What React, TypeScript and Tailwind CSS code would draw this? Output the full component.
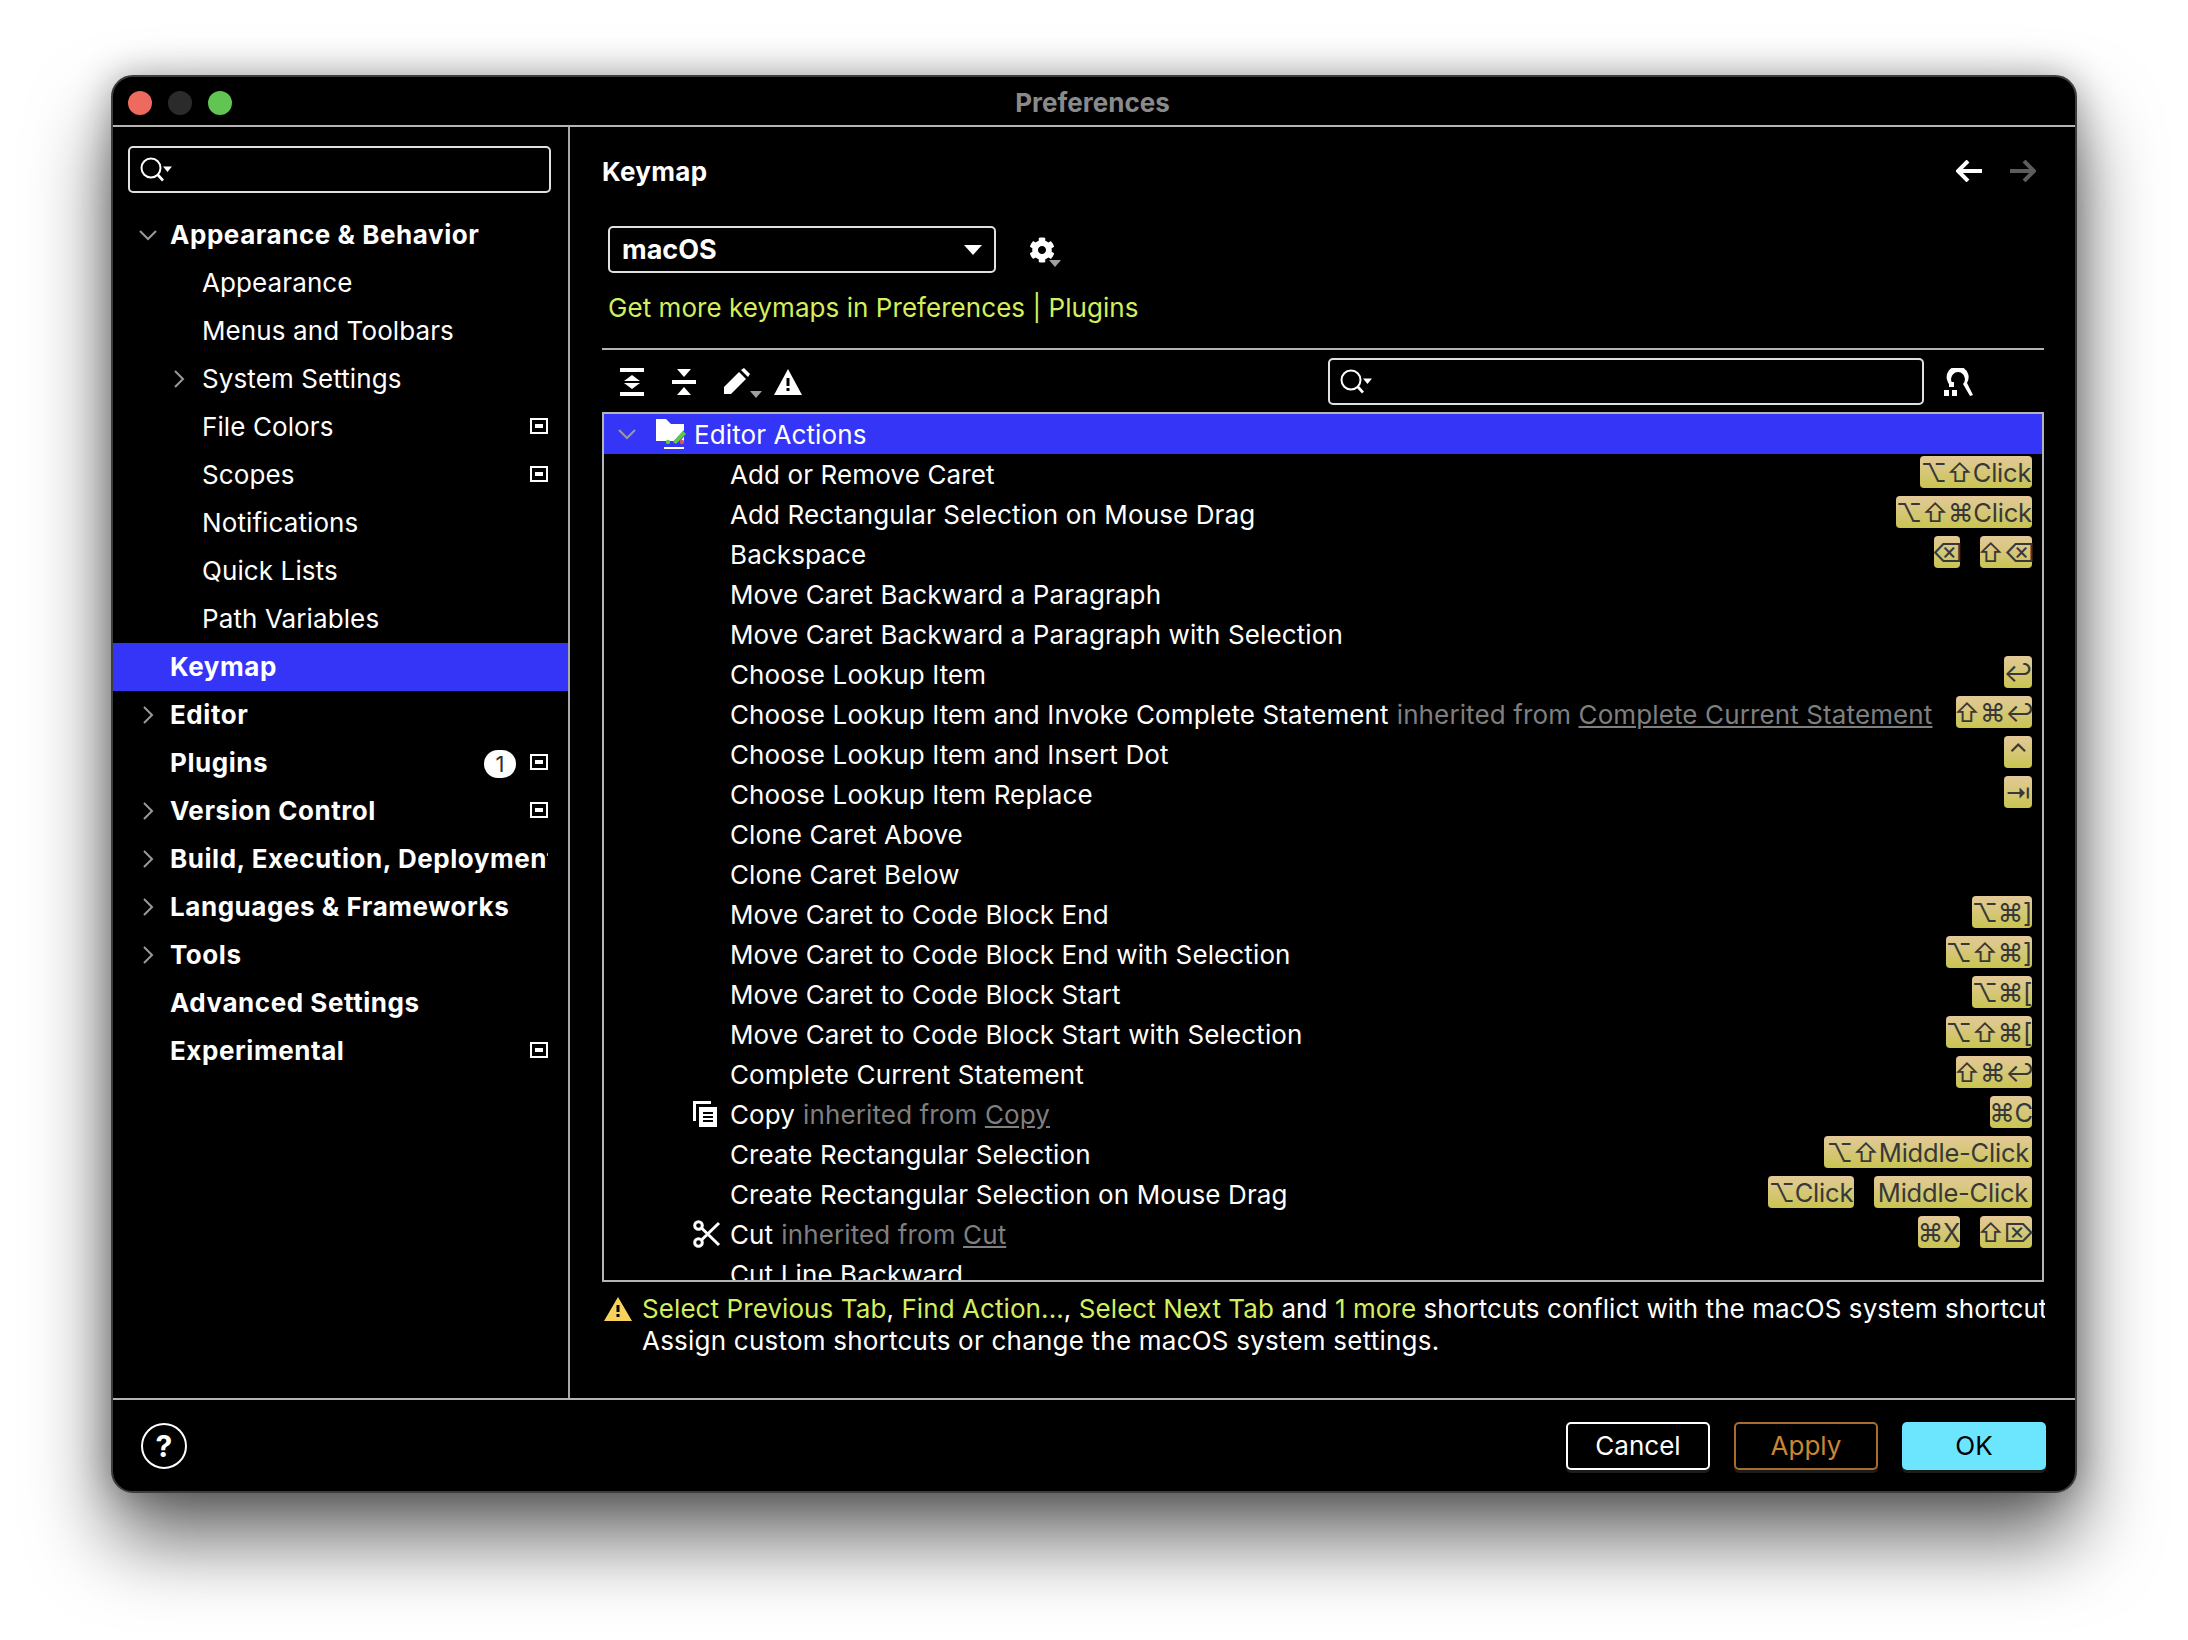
import React from 'react';
import { FaCog } from 'react-icons/fa';

const sidebarItems = [
    { label: 'Appearance & Behavior', bold: true, arrow: 'down' },
    { label: 'Appearance' },
    { label: 'Menus and Toolbars' },
    { label: 'System Settings', arrow: 'right' },
    { label: 'File Colors', project: true },
    { label: 'Scopes', project: true },
    { label: 'Notifications' },
    { label: 'Quick Lists' },
    { label: 'Path Variables' },
    { label: 'Keymap', bold: true, active: true },
    { label: 'Editor', bold: true, arrow: 'right' },
    { label: 'Plugins', bold: true, project: true, badge: true },
    { label: 'Version Control', bold: true, arrow: 'right', project: true },
    { label: 'Build, Execution, Deployment', bold: true, arrow: 'right' },
    { label: 'Languages & Frameworks', bold: true, arrow: 'right' },
    { label: 'Tools', bold: true, arrow: 'right' },
    { label: 'Advanced Settings', bold: true },
    { label: 'Experimental', bold: true, project: true },
];

interface Chip {
    text: string;
    w: string;
}

interface Row {
    label: string;
    inherited?: string;
    icon?: 'copy' | 'cut';
    chips?: Chip[];
}

const rows: Row[] = [
    { label: 'Add or Remove Caret', chips: [{ text: '⌥⇧Click', w: 'w-[112px]' }] },
    { label: 'Add Rectangular Selection on Mouse Drag', chips: [{ text: '⌥⇧⌘Click', w: 'w-[136px]' }] },
    { label: 'Backspace', chips: [{ text: '⌫', w: 'w-[26px]' }, { text: '⇧⌫', w: 'w-[52px]' }] },
    { label: 'Move Caret Backward a Paragraph' },
    { label: 'Move Caret Backward a Paragraph with Selection' },
    { label: 'Choose Lookup Item', chips: [{ text: '↩', w: 'w-[28px]' }] },
    { label: 'Choose Lookup Item and Invoke Complete Statement', inherited: 'Complete Current Statement', chips: [{ text: '⇧⌘↩', w: 'w-[76px]' }] },
    { label: 'Choose Lookup Item and Insert Dot', chips: [{ text: '⌃', w: 'w-[28px]' }] },
    { label: 'Choose Lookup Item Replace', chips: [{ text: '⇥', w: 'w-[28px]' }] },
    { label: 'Clone Caret Above' },
    { label: 'Clone Caret Below' },
    { label: 'Move Caret to Code Block End', chips: [{ text: '⌥⌘]', w: 'w-[60px]' }] },
    { label: 'Move Caret to Code Block End with Selection', chips: [{ text: '⌥⇧⌘]', w: 'w-[86px]' }] },
    { label: 'Move Caret to Code Block Start', chips: [{ text: '⌥⌘[', w: 'w-[60px]' }] },
    { label: 'Move Caret to Code Block Start with Selection', chips: [{ text: '⌥⇧⌘[', w: 'w-[86px]' }] },
    { label: 'Complete Current Statement', chips: [{ text: '⇧⌘↩', w: 'w-[76px]' }] },
    { label: 'Copy', inherited: 'Copy', icon: 'copy', chips: [{ text: '⌘C', w: 'w-[42px]' }] },
    { label: 'Create Rectangular Selection', chips: [{ text: '⌥⇧Middle-Click', w: 'w-[208px]' }] },
    { label: 'Create Rectangular Selection on Mouse Drag', chips: [{ text: '⌥Click', w: 'w-[86px]' }, { text: 'Middle-Click', w: 'w-[158px]' }] },
    { label: 'Cut', inherited: 'Cut', icon: 'cut', chips: [{ text: '⌘X', w: 'w-[42px]' }, { text: '⇧⌦', w: 'w-[52px]' }] },
    { label: 'Cut Line Backward' },
];

function SearchIcon() {
    return (
        <svg width="34" height="26" viewBox="0 0 34 26" fill="none">
            <circle cx="11" cy="11" r="9.5" stroke="white" strokeWidth="2" />
            <path d="M17.5 17.5 L23 23.5" stroke="white" strokeWidth="2.6" />
            <path d="M23 9.5 H32 L27.5 15 Z" fill="white" />
        </svg>
    );
}

function Chevron({ dir, color = '#9a9a9a' }: { dir: string; color?: string }) {
    return (
        <svg width="18" height="18" viewBox="0 0 18 18" fill="none">
            {dir === 'down'
                ? <path d="M1 5 L9 13 L17 5" stroke={color} strokeWidth="2" />
                : <path d="M5 1 L13 9 L5 17" stroke={color} strokeWidth="2" />}
        </svg>
    );
}

function ProjectIcon() {
    return <div className="w-[18px] h-[16px] border-[2px] border-white flex items-center justify-center"><div className="w-[12px] h-[8px] border-[2px] border-black bg-white" /></div>;
}

function CopyIcon() {
    return (
        <svg width="24" height="26" viewBox="0 0 24 26">
            <path d="M0 0 H18 V3 H3 V20 H0 Z" fill="white" />
            <path fillRule="evenodd" d="M6 6 H24 V26 H6 Z M10 11 V13 H20 V11 Z M10 15 V17 H20 V15 Z M10 19 V21 H20 V19 Z" fill="white" />
        </svg>
    );
}

function CutIcon() {
    return (
        <svg width="28" height="28" viewBox="0 0 28 28" fill="none" stroke="white" strokeWidth="3">
            <circle cx="5.5" cy="5.5" r="3.8" />
            <circle cx="5.5" cy="22.5" r="3.8" />
            <path d="M8.5 8 L26 25 M8.5 20 L26 3" />
        </svg>
    );
}

function FolderIcon() {
    return (
        <svg width="32" height="30" viewBox="0 0 32 30">
            <path d="M0 0 H10 L15 5 H28 V22 H0 Z" fill="white" />
            <path d="M13 27 L30 9 L32 13 L20 27 Z" fill="#3535f8" />
            <path d="M17 23 L27 12 L30 15 L20 25 Z" fill="#5fc84a" />
            <circle cx="12" cy="23" r="2.2" fill="#5fc84a" />
            <circle cx="26" cy="23" r="2.2" fill="#e2574c" />
            <rect x="8" y="28" width="20" height="2" fill="white" />
        </svg>
    );
}

function ShortcutChip({ chip }: { chip: Chip }) {
    return (
        <span className={`${chip.w} h-[32px] rounded-[4px] bg-gradient-to-b from-[#e3c998] to-[#c9c44f] text-[#383838] text-[25.5px] leading-[33px] tracking-[-0.2px] flex justify-center whitespace-nowrap`}>
            {chip.text}
        </span>
    );
}

function KeymapRow({ row }: { row: Row }) {
    return (
        <div className="h-[40px] shrink-0 flex items-center pl-[88px] pr-[10px] text-white text-[26px] tracking-[0.12px] whitespace-nowrap">
            <div className="w-[38px] h-[28px] flex items-center pl-[1px]">
                {row.icon === 'copy' && <CopyIcon />}
                {row.icon === 'cut' && <CutIcon />}
            </div>
            <span>{row.label}</span>
            {row.inherited && (
                <span className="ml-[8px] text-[#7f7f7f]">
                    inherited from <span className="underline">{row.inherited}</span>
                </span>
            )}
            <div className="ml-auto flex gap-[20px] -mt-[4px]">
                {row.chips?.map((chip) => <ShortcutChip key={chip.text} chip={chip} />)}
            </div>
        </div>
    );
}

export default function App() {
    return (
        <div className="w-[2188px] h-[1640px] bg-white overflow-hidden pt-[75px] pl-[111px] font-['Inter','DejaVu_Sans',sans-serif]">
            <div className="w-[1966px] h-[1418px] bg-black rounded-[22px] border-[2px] border-[#3d3d3d] overflow-hidden shadow-[0_46px_80px_rgba(0,0,0,0.6),0_0_36px_rgba(0,0,0,0.3)] flex flex-col">
                {/* title bar */}
                <div className="h-[50px] shrink-0 border-b-[2px] border-[#b4b4b4] flex items-center">
                    <div className="flex gap-[16px] ml-[15px] mt-[3px]">
                        <div className="w-[24px] h-[24px] rounded-full bg-[#ee6a5f]" />
                        <div className="w-[24px] h-[24px] rounded-full bg-[#2b2b2b]" />
                        <div className="w-[24px] h-[24px] rounded-full bg-[#61c554]" />
                    </div>
                    <div className="flex-1 text-center text-[#8a8a8a] font-bold text-[26px] pr-[122px] mt-[2px]">Preferences</div>
                </div>

                <div className="h-[1271px] shrink-0 flex">
                    {/* sidebar */}
                    <div className="w-[457px] shrink-0 border-r-[2px] border-[#a8a8a8]">
                        <div className="ml-[15px] mt-[19px] w-[423px] h-[47px] border-[2px] border-[#e0e0e0] rounded-[5px] flex items-center pl-[10px]">
                            <SearchIcon />
                        </div>
                        <div className="mt-[18px]">
                            {sidebarItems.map((item) => (
                                <div key={item.label} className={`h-[48px] flex items-center relative text-white text-[26px] ${item.active ? 'bg-[#3535f8]' : ''}`}>
                                    {item.arrow && (
                                        <div className={`absolute top-[15px] ${item.bold ? 'left-[26px]' : 'left-[57px]'}`}>
                                            <Chevron dir={item.arrow} />
                                        </div>
                                    )}
                                    <span className={`whitespace-nowrap overflow-hidden -mt-[1px] ${item.bold ? 'ml-[57px] font-bold tracking-[0.55px] w-[378px]' : 'ml-[89px] tracking-[0.1px]'}`}>{item.label}</span>
                                    {item.badge && (
                                        <div className="absolute left-[371px] top-[11px] w-[32px] h-[28px] rounded-full bg-white text-[#303030] text-[22px] leading-[28px] text-center">1</div>
                                    )}
                                    {item.project && <div className="absolute left-[417px] top-[15px]"><ProjectIcon /></div>}
                                </div>
                            ))}
                        </div>
                    </div>

                    {/* keymap panel */}
                    <div className="flex-1 min-w-0 pl-[32px] pr-[31px]">
                        <div className="mt-[20px] h-[48px] flex items-center justify-between">
                            <span className="text-white font-bold text-[26px] tracking-[0.3px]">Keymap</span>
                            <div className="flex gap-[28px] mr-[8px]">
                                <svg width="26" height="22" viewBox="0 0 26 22" fill="none"><path d="M26 11 H4 M12 1 L2 11 L12 21" stroke="white" strokeWidth="4" /></svg>
                                <svg width="26" height="22" viewBox="0 0 26 22" fill="none"><path d="M0 11 H22 M14 1 L24 11 L14 21" stroke="#5c5c5c" strokeWidth="4" /></svg>
                            </div>
                        </div>

                        <div className="mt-[31px] ml-[6px] flex items-center">
                            <div className="w-[388px] h-[47px] border-[2px] border-[#e0e0e0] rounded-[5px] flex items-center justify-between pl-[12px] pr-[12px]">
                                <span className="text-white font-bold text-[27px] mt-[2px]">macOS</span>
                                <svg width="18" height="10" viewBox="0 0 18 10"><path d="M0 0 H18 L9 10 Z" fill="white" /></svg>
                            </div>
                            <div className="relative ml-[33px] w-[32px] h-[30px] mt-[5px]">
                                <FaCog className="text-white text-[26px]" />
                                <svg className="absolute right-0 bottom-0" width="12" height="7" viewBox="0 0 12 7"><path d="M0 0 H12 L6 7 Z" fill="#a0a0a0" /></svg>
                            </div>
                        </div>

                        <div className="mt-[14px] ml-[6px] h-[40px] flex items-center text-[#d3ef5c] text-[26px] tracking-[0.05px]">Get more keymaps in Preferences | Plugins</div>

                        <div className="mt-[21px] h-[2px] bg-[#b4b4b4]" />

                        {/* toolbar */}
                        <div className="h-[62px] flex items-start pt-[8px]">
                            <div className="flex items-center h-[47px] pl-[18px] gap-[28px]">
                                <svg width="24" height="28" viewBox="0 0 24 28" fill="white">
                                    <rect width="24" height="4" /><rect y="24" width="24" height="4" />
                                    <path d="M12 7 L20 13 H4 Z M12 21 L4 15 H20 Z" />
                                </svg>
                                <svg width="24" height="28" viewBox="0 0 24 28" fill="white">
                                    <rect y="12" width="24" height="4" />
                                    <path d="M5 1 H19 L12 9 Z M5 27 H19 L12 19 Z" />
                                </svg>
                                <div className="relative w-[30px] h-[28px]">
                                    <svg width="26" height="26" viewBox="0 0 26 26" fill="white">
                                        <path d="M0 19 L15 4 L22 11 L7 26 H0 Z" />
                                        <path d="M17 2 L20 0 L26 6 L24 9 Z" />
                                    </svg>
                                    <svg className="absolute right-[-8px] bottom-[-2px]" width="12" height="7" viewBox="0 0 12 7"><path d="M0 0 H12 L6 7 Z" fill="#a0a0a0" /></svg>
                                </div>
                                <svg className="-ml-[8px]" width="28" height="26" viewBox="0 0 28 26">
                                    <path fillRule="evenodd" d="M14 0 L28 26 H0 Z M12.5 9 V17 H15.5 V9 Z M12.5 19 V22 H15.5 V19 Z" fill="white" />
                                </svg>
                            </div>
                            <div className="ml-auto w-[596px] h-[47px] border-[2px] border-[#e0e0e0] rounded-[5px] flex items-center pl-[10px]">
                                <SearchIcon />
                            </div>
                            <svg className="ml-[19px] mr-[69px] mt-[10px]" width="32" height="28" viewBox="0 0 32 28" fill="white">
                                <path d="M8 18 A11 11 0 1 1 24 15 L30 27 L27 28 L20 16 A7 7 0 1 0 10 16 Z" />
                                <rect x="6" y="14" width="5" height="5" /><rect x="1" y="22" width="5" height="6" /><rect x="9" y="22" width="5" height="6" />
                            </svg>
                        </div>

                        {/* actions table */}
                        <div className="h-[870px] border-[2px] border-[#b4b4b4] overflow-hidden flex flex-col">
                            <div className="h-[40px] shrink-0 bg-[#3535f8] flex items-center text-white text-[26px] tracking-[0.1px] pl-[14px]">
                                <Chevron dir="down" />
                                <div className="ml-[20px] mr-[6px]"><FolderIcon /></div>
                                <span>Editor Actions</span>
                            </div>
                            {rows.map((row) => <KeymapRow key={row.label} row={row} />)}
                        </div>

                        {/* conflict warning */}
                        <div className="mt-[11px] relative pl-[40px] w-[1443px] overflow-hidden text-[26px] leading-[32px] text-white whitespace-nowrap">
                            <svg className="absolute left-[2px] top-[4px]" width="28" height="24" viewBox="0 0 28 24">
                                <path fillRule="evenodd" d="M14 0 L28 24 H0 Z M12.5 8 V15 H15.5 V8 Z M12.5 17 V20 H15.5 V17 Z" fill="#f9d25e" />
                            </svg>
                            <div className="tracking-[0.08px]">
                                <span className="text-[#d3ef5c]">Select Previous Tab</span>, <span className="text-[#d3ef5c]">Find Action...</span>, <span className="text-[#d3ef5c]">Select Next Tab</span> and <span className="text-[#d3ef5c]">1 more</span> shortcuts conflict with the macOS system shortcuts.
                            </div>
                            <div className="tracking-[0.22px]">Assign custom shortcuts or change the macOS system settings.</div>
                        </div>
                    </div>
                </div>

                {/* footer */}
                <div className="flex-1 border-t-[2px] border-[#b4b4b4] flex items-center">
                    <div className="ml-[28px] w-[46px] h-[46px] rounded-full border-[2px] border-white text-white font-bold text-[30px] leading-[42px] text-center">?</div>
                    <div className="ml-auto mr-[29px] flex gap-[24px] text-[26px]">
                        <div className="w-[144px] h-[48px] rounded-[5px] border-[2px] border-white text-white flex items-center justify-center shadow-[0_3px_0_#1c1c1c]">Cancel</div>
                        <div className="w-[144px] h-[48px] rounded-[5px] border-[2px] border-[#a86c2c] text-[#cc8533] flex items-center justify-center shadow-[0_3px_0_#1c1c1c]">Apply</div>
                        <div className="w-[144px] h-[48px] rounded-[5px] bg-[#6ce6ff] text-black flex items-center justify-center shadow-[0_3px_0_#1c1c1c]">OK</div>
                    </div>
                </div>
            </div>
        </div>
    );
}
